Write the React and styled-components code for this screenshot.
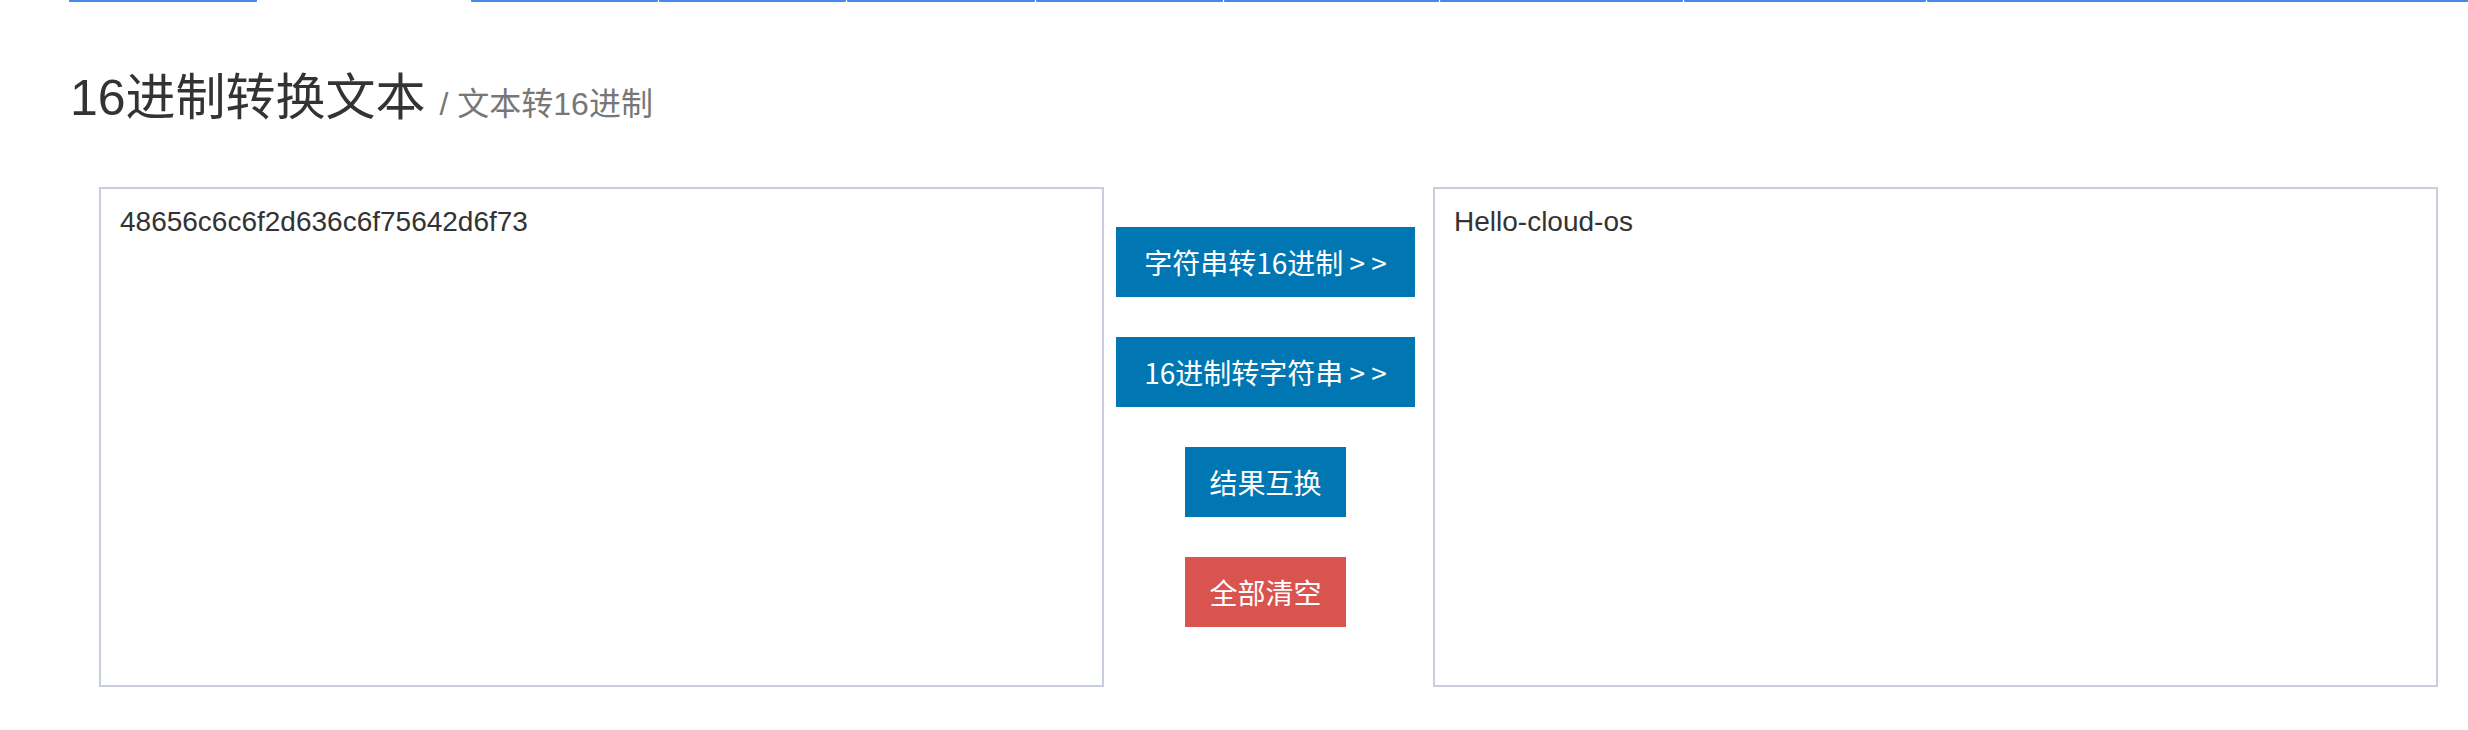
import React from "react";
import styled, { createGlobalStyle } from "styled-components";

const GlobalStyle = createGlobalStyle`
  html, body { margin: 0; padding: 0; background: #fff; }
  body { font-family: "Liberation Sans", "Noto Sans CJK SC", sans-serif; color: #333; }
  * { box-sizing: border-box; }
`;

const Page = styled.div`
  width: 2468px;
  min-height: 730px;
  background: #fff;
`;

const TabBar = styled.div`
  display: flex;
  gap: 1px;
  padding-left: 69px;
  height: 2px;
  overflow: hidden;
`;

const Tab = styled.div`
  flex: ${(p) => (p.$w ? `0 0 ${p.$w}px` : "1 1 auto")};
  height: 2px;
  background: ${(p) => (p.$active ? "transparent" : "#4589e8")};
  border-radius: 0 0 1px 1px;
`;

const Content = styled.div`
  padding: 0 30px 0 70px;
`;

const Title = styled.h1`
  margin: 69px 0 0;
  font-family: "Liberation Sans", "Noto Sans CJK SC", sans-serif;
  font-weight: 400;
  font-size: 50px;
  line-height: 55px;
  color: #333;
`;

const Sub = styled.small`
  font-size: 32px;
  color: #777;
`;

const Row = styled.div`
  display: grid;
  grid-template-columns: 1fr 329px 1fr;
  margin-top: 55px;
  padding-left: 29px;
`;

const TextBox = styled.textarea`
  display: block;
  width: 100%;
  height: 500px;
  margin: 0;
  padding: 13px 19px;
  border: 2px solid #c8cedf;
  border-radius: 0;
  background: #fff;
  font-family: "Liberation Sans", Arial, sans-serif;
  font-size: 28px;
  line-height: 40px;
  color: #333;
  resize: none;
  outline: none;
`;

const Actions = styled.div`
  display: flex;
  flex-direction: column;
  align-items: center;
  gap: 40px;
  padding: 40px 6px 0 0;
`;

const ActionButton = styled.button`
  height: 70px;
  min-width: ${(p) => p.$minWidth || 0}px;
  padding: 0 24px;
  border: none;
  border-radius: 0;
  background: ${(p) => (p.$danger ? "#d9534f" : "#0077b3")};
  color: #fff;
  font-family: "Noto Sans CJK SC", "Liberation Sans", sans-serif;
  font-size: 28px;
  line-height: 40px;
  white-space: pre;
  cursor: pointer;
`;

const tabs = [188, 212, 187, 187, 188, 187, 215, 243, 242, null];

export default function App() {
  return (
    <Page>
      <GlobalStyle />
      <TabBar>
        {tabs.map((w, i) => (
          <Tab key={i} $w={w} $active={i === 1} />
        ))}
      </TabBar>
      <Content>
        <Title>
          16进制转换文本 <Sub>/ 文本转16进制</Sub>
        </Title>
        <Row>
          <TextBox defaultValue="48656c6c6f2d636c6f75642d6f73" />
          <Actions>
            <ActionButton $minWidth={299}>字符串转16进制 &gt; &gt;</ActionButton>
            <ActionButton $minWidth={299}>16进制转字符串 &gt; &gt;</ActionButton>
            <ActionButton $minWidth={160}>结果互换</ActionButton>
            <ActionButton $minWidth={160} $danger>全部清空</ActionButton>
          </Actions>
          <TextBox defaultValue="Hello-cloud-os" />
        </Row>
      </Content>
    </Page>
  );
}
